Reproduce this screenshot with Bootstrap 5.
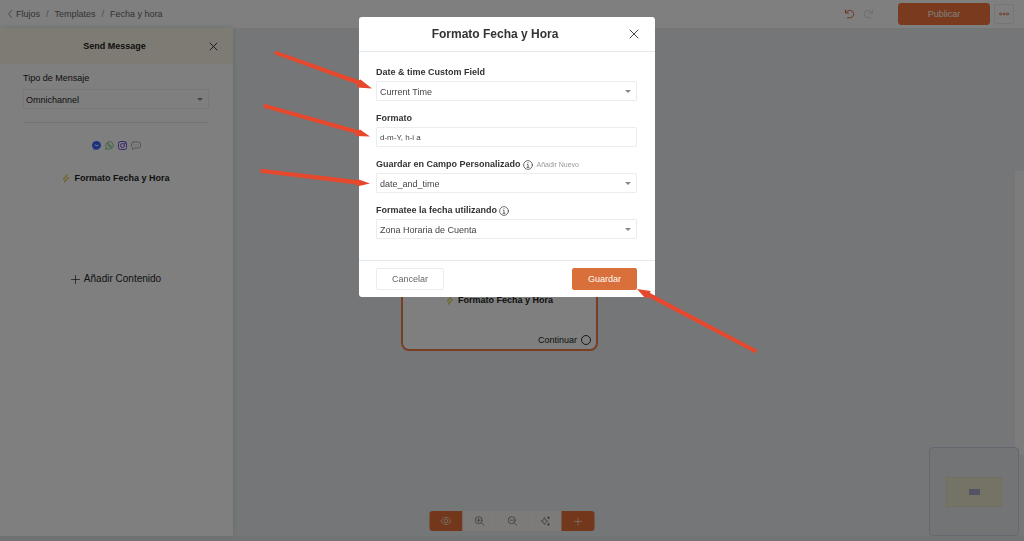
<!DOCTYPE html>
<html lang="es">
<head>
<meta charset="utf-8">
<meta name="viewport" content="width=device-width, initial-scale=1">
<title>Fecha y hora</title>
<link href="https://cdn.jsdelivr.net/npm/bootstrap@5.3.0/dist/css/bootstrap.min.css" rel="stylesheet">
<style>
  :root { --brand: #d9703c; --ink: #222; --line: #e9edef; }
  body { font-family: "Liberation Sans", Arial, sans-serif; font-size: 9px; line-height: 12px; color: var(--ink); background: #e4e6e8; }
  svg { display: block; flex: none; }
  .ico { fill: none; stroke: currentColor; stroke-linecap: round; stroke-linejoin: round; }
  .plain { border: 0; padding: 0; background: none; color: inherit; }

  /* top bar */
  .topbar { height: 28px; padding: 0 10px 0 8px; background: #fff; }
  .topbar a, .topbar span { color: #686868; text-decoration: none; }
  .breadcrumb { --bs-breadcrumb-font-size: 9px; --bs-breadcrumb-item-padding-x: 6px; --bs-breadcrumb-divider-color: #999; }
  .btn { --bs-btn-font-size: 9px; --bs-btn-line-height: 12px; --bs-btn-padding-x: 0; --bs-btn-padding-y: 4px; --bs-btn-border-radius: 2px; }
  .btn-brand { --bs-btn-color: #fff; --bs-btn-bg: var(--brand); --bs-btn-border-color: var(--brand); --bs-btn-hover-bg: #c5602e; --bs-btn-hover-color: #fff; }
  .btn-publish { --bs-btn-color: #fff; --bs-btn-bg: #f2753a; --bs-btn-border-color: #f2753a; --bs-btn-border-radius: 3px; width: 92px; }
  .btn-more { width: 20px; height: 20px; --bs-btn-padding-y: 0; --bs-btn-border-color: #ececec; }
  .accent { color: #d86a3c; }
  .faded { color: #d8d8d8; }

  /* side panel */
  .workspace { background: #eaedf0; margin-bottom: 5px; }
  .side { width: 233px; background: #fff; box-shadow: 0 0 6px #ccd6da; }
  .side-head { height: 36px; background: #fdf6e8; }
  .side-close { right: 15px; }
  .side-body { padding: 7px 24px 0 23px; }
  .side-rule { margin: 13px 0 0; border-color: #bbb; opacity: .35; }
  .channels { gap: 4px; margin-top: 18px; }
  .messenger { color: #3a62ff; }
  .whatsapp { color: #6dc57a; }
  .instagram { color: #7452dd; }
  .sms { color: #999; }
  .bolt { color: #dccb50; }
  .step-name { gap: 4px; font-weight: bold; }
  .side .step-name { margin-top: 22px; }
  .add-wrap { margin: 80px -13px 0; }
  .add-box { height: 30px; border: 1px dashed #fafcfc; font-size: 10px; }

  /* fields */
  .form-label { line-height: 14px; margin-bottom: 2px; }
  .form-select, .form-control { height: 20px; min-height: 20px; padding: 2px 3px 1px; font-size: 9px; line-height: 15px; color: #444; border: 1px solid var(--line); border-radius: 1px; }
  .form-select { padding-top: 3px; padding-bottom: 0; background: #fff url("data:image/svg+xml,%3Csvg xmlns='http://www.w3.org/2000/svg' viewBox='0 0 6 3'%3E%3Cpath d='M0 0h6L3 3z' fill='%23888'/%3E%3C/svg%3E") no-repeat right 5px center / 6px 3px; }
  .form-control.code { font-size: 8px; }
  .side .form-select { color: #222; border-color: #f0f0f0; padding-left: 2px; }

  /* flow canvas */
  .node-card { left: 401px; top: 210px; width: 197px; height: 113px; border: 2px solid #f07d45; border-radius: 8px; background: #fff; padding: 54px 5px 3px; }
  .port { width: 10px; height: 10px; border: 1px solid #333; border-radius: 50%; }
  .tools { bottom: 5px; }
  .tools .btn { height: 20px; width: 33px; --bs-btn-padding-y: 0; --bs-btn-border-width: 0; --bs-btn-border-radius: 3px; color: #777; background: #f8f6f4; }
  .tools .btn-brand { color: #f0e4dc; background: #e66f38; }
  .minimap { right: 5px; bottom: 0; width: 90px; height: 89px; border: 1px solid #c9cde0; border-radius: 4px; background: #e6e8ea; }
  .minimap-view { width: 56px; height: 30px; background: #e8e6cc; border: 1px solid #e4e2be; }
  .minimap-node { width: 11px; height: 6px; background: #a4a7c8; }
  .rail { right: 0; top: 143px; bottom: 81px; width: 9px; background: #f8f9fb; }

  /* dialog */
  .modal { padding-right: 10px; overflow: visible; }
  .modal-dialog { width: 296px; margin: 17px auto 0; }
  .modal-content { border: 0; border-radius: 3px; color: #333; }
  .modal-header { height: 35px; padding: 0 24px 0 0; border-color: #e3e8e8; }
  .modal-title { font-size: 12px; line-height: 16px; }
  .modal-x { right: 16px; }
  .modal-body { padding: 13px 18px 21px 17px; }
  .field { margin-bottom: 10px; }
  .field:last-child { margin-bottom: 0; }
  .info { margin: 0 4px 0 2px; }
  .modal-footer { padding: 7px 18px 7px 17px; border-color: #e3e8e8; }
  .modal-footer > * { margin: 0; }
  .btn-cancel { width: 68px; --bs-btn-color: #666; --bs-btn-border-color: #e9edef; }
  .btn-save { width: 65px; }
  .hint { font-size: 7px; color: #999; text-decoration: none; }
  .arrows { left: 0; top: 0; overflow: visible; pointer-events: none; }
</style>
</head>
<body class="d-flex flex-column min-vh-100">

<header class="topbar d-flex align-items-center">
  <nav aria-label="Ruta" class="d-flex align-items-center me-auto">
    <svg class="ico me-1 sms" width="4" height="8" viewBox="0 0 4 8"><path d="M3.500.5.7 4l2.800 3.500"/></svg>
    <ol class="breadcrumb mb-0">
      <li class="breadcrumb-item"><a href="#">Flujos</a></li>
      <li class="breadcrumb-item"><a href="#">Templates</a></li>
      <li class="breadcrumb-item"><span>Fecha y hora</span></li>
    </ol>
  </nav>
  <button class="plain accent me-2" aria-label="Deshacer"><svg class="ico" width="11" height="10" viewBox="0 0 11 10"><path d="M1.500 1v3h3M1.800 3.800C3 1.700 5 1.200 6.500 1.500 9 2 10 4 9.500 6 9 8.200 7 9 5 8.800H3.500"/></svg></button>
  <button class="plain faded me-4" aria-label="Rehacer"><svg class="ico" width="11" height="10" viewBox="0 0 11 10"><path d="M9.500 1v3h-3M9.200 3.800C8 1.700 6 1.200 4.500 1.500 2 2 1 4 1.500 6 2 8.200 4 9 6 8.800h1.500"/></svg></button>
  <button class="btn btn-brand btn-publish me-1">Publicar</button>
  <button class="btn btn-more accent d-flex align-items-center justify-content-center" aria-label="Más"><svg class="ico" width="10" height="4" viewBox="0 0 10 4" stroke-width=".8"><circle cx="1.500" cy="2" r="1"/><circle cx="5" cy="2" r="1"/><circle cx="8.500" cy="2" r="1"/></svg></button>
</header>

<main class="workspace position-relative d-flex flex-grow-1">
  <aside class="side">
    <div class="side-head position-relative d-flex align-items-center justify-content-center fw-bold">
      <span class="pe-1">Send Message</span>
      <button class="plain side-close position-absolute" aria-label="Cerrar panel"><svg class="ico" width="9" height="9" viewBox="0 0 9 9" stroke-width=".9"><path d="M1 1l7 7M8 1 1 8"/></svg></button>
    </div>
    <div class="side-body">
      <label class="form-label d-block mb-1" for="tipo">Tipo de Mensaje</label>
      <select class="form-select" id="tipo"><option>Omnichannel</option></select>
      <hr class="side-rule">
      <div class="channels d-flex justify-content-center">
        <svg class="messenger" width="9" height="9" viewBox="0 0 18 18"><path d="M9 0c5 0 9 3.700 9 8.700s-4 8.600-9 8.600l-2.600-.3L3.500 18v-2.600C1.300 13.800 0 11.500 0 8.700 0 3.700 4 0 9 0z" fill="currentColor"/><path d="M3.500 11.300 7 6.500l3.300 2.600 4-2.800-3.500 5-3.300-2.600z" fill="#fff"/></svg>
        <svg class="ico whatsapp" width="9" height="9" viewBox="0 0 18 18" stroke-width="1.700"><path d="M1.500 16.500 2.600 12.800A7.600 7.600 0 1 1 5.500 15.500z"/><path d="M5.500 5.500c0 4 3 7 7 7l1-2-2.200-1.200-1.200 1C8.800 9.500 8.300 9 7.600 7.800l1-1L7.500 4.600z"/></svg>
        <svg class="ico instagram" width="9" height="9" viewBox="0 0 18 18" stroke-width="2"><rect x="1" y="1" width="16" height="16" rx="4"/><circle cx="9" cy="9" r="4"/><circle cx="13.500" cy="4.500" r=".6"/></svg>
        <svg class="ico sms" width="10" height="9" viewBox="0 0 20 18" stroke-width="1.600"><path d="M5 2h10a4 4 0 0 1 4 4v4a4 4 0 0 1-4 4H7l-4 3v-4a4 4 0 0 1-2-3V6a4 4 0 0 1 4-4zM6 8h.1M10 8h.1M14 8h.1"/></svg>
      </div>
      <div class="step-name d-flex justify-content-center align-items-center">
        <svg class="ico bolt" width="8" height="9" viewBox="0 0 8 9"><path d="M5 .5 1 5h2.500L2.500 8.500 7 3.800H4.300z"/></svg>
        Formato Fecha y Hora
      </div>
      <div class="add-wrap">
        <button class="btn add-box w-100 d-flex align-items-center justify-content-center gap-1">
          <svg class="ico" width="9" height="9" viewBox="0 0 9 9" stroke-width=".7"><path d="M4.500.5v8M.5 4.500h8"/></svg>
          <span>Añadir Contenido</span>
        </button>
      </div>
    </div>
  </aside>

  <section class="node-card position-absolute d-flex flex-column justify-content-between">
    <div class="step-name d-flex justify-content-center align-items-center">
      <svg class="ico bolt" width="8" height="9" viewBox="0 0 8 9"><path d="M5 .5 1 5h2.500L2.500 8.500 7 3.800H4.300z"/></svg>
      Formato Fecha y Hora
    </div>
    <div class="d-flex justify-content-end align-items-center gap-1">Continuar <span class="port"></span></div>
  </section>

  <div class="rail position-absolute"></div>
  <div class="minimap position-absolute d-flex align-items-center justify-content-center">
    <div class="minimap-view d-flex align-items-center justify-content-center"><div class="minimap-node"></div></div>
  </div>

  <div class="tools btn-group position-absolute start-50 translate-middle-x">
    <button class="btn btn-brand m-0 d-flex align-items-center justify-content-center" aria-label="Vista previa"><svg class="ico" width="11" height="8" viewBox="0 0 11 8" stroke-width=".8"><path d="M.5 4C2 1.500 3.700.5 5.500.5S9 1.500 10.500 4C9 6.500 7.300 7.500 5.500 7.500S2 6.500.5 4z"/><circle cx="5.500" cy="4" r="1.800"/></svg></button>
    <button class="btn m-0 d-flex align-items-center justify-content-center" aria-label="Acercar"><svg class="ico" width="10" height="10" viewBox="0 0 10 10" stroke-width=".8"><circle cx="4.200" cy="4.200" r="3.500"/><path d="M6.800 6.800 9.500 9.500M2.700 4.200h3M4.200 2.700v3"/></svg></button>
    <button class="btn m-0 d-flex align-items-center justify-content-center" aria-label="Alejar"><svg class="ico" width="10" height="10" viewBox="0 0 10 10" stroke-width=".8"><circle cx="4.200" cy="4.200" r="3.500"/><path d="M6.800 6.800 9.500 9.500M2.700 4.200h3"/></svg></button>
    <button class="btn m-0 d-flex align-items-center justify-content-center" aria-label="Ordenar"><svg class="ico" width="10" height="10" viewBox="0 0 10 10" stroke-width=".8"><path d="M4 1.800 5.200 4 7.200 5.200 5.200 6.300 4 8.500 2.800 6.300.7 5.200 2.800 4zM8 .5v2.400M6.800 1.700h2.400M8 7.200v2.400M6.800 8.400h2.400"/></svg></button>
    <button class="btn btn-brand m-0 d-flex align-items-center justify-content-center" aria-label="Añadir"><svg class="ico" width="9" height="9" viewBox="0 0 9 9" stroke-width=".8"><path d="M4.500 1v7M1 4.500h7"/></svg></button>
  </div>
</main>

<div class="modal-backdrop show"></div>
<div class="modal show d-block" tabindex="-1" role="dialog" aria-labelledby="dlgTitle">
  <div class="modal-dialog">
    <form class="modal-content">
      <div class="modal-header position-relative justify-content-center">
        <h1 class="modal-title fw-bold" id="dlgTitle">Formato Fecha y Hora</h1>
        <button type="button" class="plain modal-x position-absolute" aria-label="Cerrar"><svg class="ico" width="10" height="10" viewBox="0 0 10 10" stroke-width=".9"><path d="M1 1l8 8M9 1 1 9"/></svg></button>
      </div>
      <div class="modal-body">
        <div class="field">
          <label class="form-label d-block fw-bold" for="campo">Date &amp; time Custom Field</label>
          <select class="form-select" id="campo"><option>Current Time</option></select>
        </div>
        <div class="field">
          <label class="form-label d-block fw-bold" for="formato">Formato</label>
          <input class="form-control code" id="formato" type="text" value="d-m-Y, h-i a">
        </div>
        <div class="field">
          <div class="d-flex align-items-center">
            <label class="form-label fw-bold" for="guardar">Guardar en Campo Personalizado</label>
            <svg class="ico info" width="10" height="10" viewBox="0 0 10 10" stroke-width=".7"><circle cx="5" cy="5" r="4.400"/><path d="M4.200 4.300H5v2.900M4 7.300h2M5 2.600v.1"/></svg>
            <a class="hint" href="#">Añadir Nuevo</a>
          </div>
          <select class="form-select" id="guardar"><option>date_and_time</option></select>
        </div>
        <div class="field">
          <div class="d-flex align-items-center">
            <label class="form-label fw-bold" for="zona">Formatee la fecha utilizando</label>
            <svg class="ico info" width="10" height="10" viewBox="0 0 10 10" stroke-width=".7"><circle cx="5" cy="5" r="4.400"/><path d="M4.200 4.300H5v2.900M4 7.300h2M5 2.600v.1"/></svg>
          </div>
          <select class="form-select" id="zona"><option>Zona Horaria de Cuenta</option></select>
        </div>
      </div>
      <div class="modal-footer justify-content-between">
        <button type="button" class="btn btn-cancel">Cancelar</button>
        <button type="button" class="btn btn-brand btn-save">Guardar</button>
      </div>
    </form>
    <!-- arrows pointing at the fields and the save button, in dialog coordinates -->
    <svg class="arrows position-absolute" width="296" height="280" viewBox="359 17 296 280" fill="#e5482d" aria-hidden="true">
      <path d="M275.500 50.800 359 80.300 360.500 79.500 372 88.500 357 87.500 357.500 84.500 274 54z"/>
      <path d="M264.300 103.800 359 130.300 360 129.500 370 136.500 355 136 356 133.800 263 107.500z"/>
      <path d="M260.700 168.800 357.500 180 358 179.300 370 183.500 357 186.500 356.500 184.500 260.300 172.800z"/>
      <path d="M637 289 650.500 291 650 293 757.500 350 755.500 353.300 648 297 645.500 298.500z"/>
    </svg>
  </div>
</div>

<script src="https://cdn.jsdelivr.net/npm/bootstrap@5.3.0/dist/js/bootstrap.bundle.min.js"></script>
</body>
</html>
